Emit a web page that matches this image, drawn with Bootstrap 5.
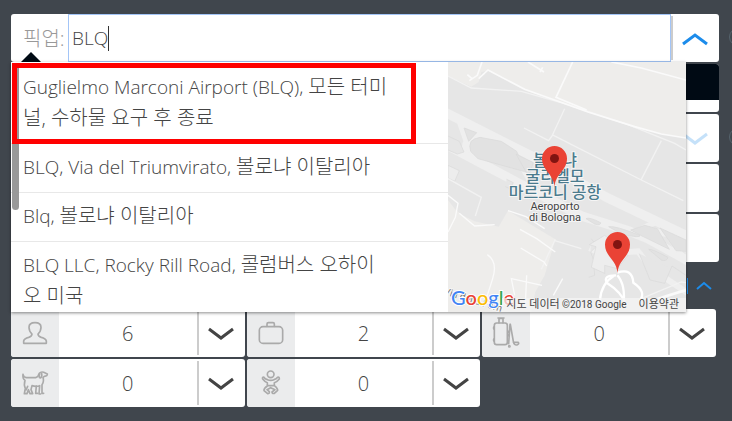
<!DOCTYPE html>
<html lang="ko">

<head>
  <meta charset="UTF-8" />
  <meta name="viewport" content="width=device-width, initial-scale=1.0" />
  <title>픽업</title>
  <link href="https://cdn.jsdelivr.net/npm/bootstrap@5.3.0/dist/css/bootstrap.min.css" rel="stylesheet" />
  <style>
    body {
      background-color: #40464d;
      color: #444;
      font-family: "Open Sans", "Noto Sans CJK KR", sans-serif;
      font-size: 19px;
      font-weight: 300;
      line-height: 31px;
    }

    .booking {
      padding: 14px 13px 14px 11px;
    }

    .fields {
      gap: 2px;
    }

    .field-row {
      height: 48px;
      background: #fff;
      border-radius: 3px;
    }

    .field-row .toggle,
    .counter .toggle {
      width: 48px;
      position: relative;
    }

    .toggle {
      border: 0;
      padding: 0;
      background: transparent;
    }

    .toggle svg,
    .more svg {
      fill: none;
      stroke: #444;
      stroke-width: 3;
    }

    .field-row .toggle svg,
    .more svg {
      stroke: #1c8ceb;
    }

    .counter .toggle::before,
    .pickup .toggle::before {
      content: "";
      position: absolute;
      left: 0;
      top: 2px;
      bottom: 2px;
      width: 2px;
      background: #ccc;
    }

    .pickup label {
      width: 57px;
      padding-left: 12px;
      color: #999;
      font-size: 20px;
      white-space: nowrap;
    }

    .pickup label::after {
      content: "";
      position: absolute;
      left: 10px;
      top: 38px;
      border: 10px solid transparent;
      border-top: 0;
      border-bottom-color: #000a14;
    }

    .pickup input {
      border: 1px solid #a3c5f7;
      padding: 0 3px;
      color: #444;
      font-weight: 300;
      outline: 0;
      caret-color: transparent;
      background: linear-gradient(#333, #333) 39px 11px / 1px 25px no-repeat;
    }

    .hint {
      position: absolute;
      left: calc(100% + 10px);
      top: 14px;
      width: 18px;
      height: 18px;
      border: 1px solid #56646d;
      border-radius: 50%;
    }

    .night {
      height: 36px;
      background: #000a14;
    }

    .faded {
      opacity: .25;
    }

    .more {
      height: 43px;
      padding-right: 7px;
    }

    .more .toggle {
      padding-left: 8px;
      border-left: 1px solid #1c8ceb;
      height: 16px;
    }

    /* suggestions panel */
    .suggest {
      position: absolute;
      z-index: 5;
      top: 48px;
      left: 0;
      right: 33px;
      height: 250px;
      background: #fff;
      box-shadow: 0 1px 3px rgba(0, 0, 0, .45);
    }

    .places {
      flex: 0 0 437px;
      padding-top: 2px;
      overflow: hidden;
    }

    .places a {
      display: block;
      padding: 8px 58px 9px 12px;
      border-bottom: 1px solid #e8e8e8;
      color: #444;
      text-decoration: none;
    }

    /* hangul is set one pixel larger than the latin text beside it */
    .places span[lang] {
      font-size: 20px;
      line-height: 30px;
    }

    .thumb {
      position: absolute;
      left: 1px;
      top: 2px;
      width: 7px;
      height: 146px;
      border-radius: 4px;
      background: #999;
    }

    .chosen {
      position: absolute;
      left: 1px;
      top: 1px;
      width: 404px;
      height: 81px;
      border: 5px solid #f00;
      pointer-events: none;
    }

    .map-pane {
      min-width: 0;
      background: #e6e6e6;
    }

    .map-label {
      font-family: Roboto, "Noto Sans CJK KR", sans-serif;
      text-anchor: middle;
      paint-order: stroke;
      stroke: #f5f5f5;
      stroke-width: 2px;
    }

    .map-legal {
      position: absolute;
      right: 0;
      bottom: 0;
      padding: 0 7px 0 4px;
      gap: 12px;
      background: rgba(245, 245, 245, .7);
      font: 400 10px/14px Roboto, "Noto Sans CJK KR", sans-serif;
      white-space: nowrap;
    }

    .map-legal [lang] {
      font-size: 11px;
    }

    .map-legal a {
      color: #444;
      text-decoration: none;
    }

    /* passenger and luggage counters */
    .counters {
      display: grid;
      grid-template-columns: repeat(3, 1fr);
      gap: 2px;
      padding-right: 3px;
    }

    .counter {
      height: 48px;
      background: #fff;
      border-radius: 3px;
      overflow: hidden;
    }

    .counter label {
      background: #ebeced;
    }

    .counter label svg {
      display: block;
      fill: none;
      stroke: #aaa;
      stroke-width: 5;
      stroke-linejoin: round;
      stroke-linecap: round;
    }

    .counter select {
      appearance: none;
      border: 0;
      background: transparent;
      color: #444;
      font-size: 20px;
      font-weight: 300;
      text-align: center;
      text-align-last: center;
      min-width: 0;
    }
  </style>
</head>

<body class="overflow-hidden">

  <main class="booking">
    <div class="fields position-relative vstack">

      <div class="field-row pickup d-flex position-relative">
        <label for="pickup" class="d-flex align-items-center position-relative">픽업:</label>
        <input id="pickup" type="text" class="flex-grow-1" value="BLQ" autocomplete="off" />
        <button class="toggle" type="button" aria-label="닫기">
          <svg width="26" height="14"><path d="M1 12 13 3 25 12" /></svg>
        </button>
        <span class="hint"></span>
      </div>
      <div class="field-row overflow-hidden"><div class="night"></div></div>
      <div class="field-row d-flex justify-content-end position-relative">
        <button class="toggle faded" type="button" aria-label="열기">
          <svg width="26" height="14"><path d="M1 2 13 11 25 2" /></svg>
        </button>
        <span class="hint"></span>
      </div>
      <div class="field-row"></div>
      <div class="field-row"></div>
      <div class="more d-flex align-items-center justify-content-end">
        <button class="toggle" type="button" aria-label="접기">
          <svg width="16" height="9" class="d-block"><path d="M1 8 8 2 15 8" stroke-width="2" /></svg>
        </button>
      </div>

      <div class="suggest d-flex">
        <div class="places position-relative">
          <a href="#">Guglielmo Marconi Airport (BLQ), <span lang="ko">모든 터미널, 수하물 요구 후 종료</span></a>
          <a href="#">BLQ, Via del Triumvirato, <span lang="ko">볼로냐 이탈리아</span></a>
          <a href="#">Blq, <span lang="ko">볼로냐 이탈리아</span></a>
          <a href="#">BLQ LLC, Rocky Rill Road, <span lang="ko">콜럼버스 오하이오 미국</span></a>
          <span class="thumb"></span>
          <span class="chosen"></span>
        </div>
        <div class="map-pane position-relative flex-grow-1 overflow-hidden">
          <svg class="d-block w-100 h-100" viewBox="0 0 238 250" preserveAspectRatio="xMidYMid slice">
            <g transform="scale(.33334)" fill="none">
              <!-- fields around the airport -->
              <path fill="#eeedeb" d="M0 0H714V228L640 216 540 190 415 150 230 85 120 26 100 30 92 60 70 74 0 42Z" />
              <path fill="#eeedeb" d="M0 414 20 440 40 458 80 478 152 494 180 446 322 532 290 640 262 690 250 750H0Z" />
              <!-- runways and taxiways -->
              <g stroke="#efefef" stroke-width="28">
                <path d="M-10 150 250 282 480 408 730 528" />
                <path d="M-10 246 240 378 400 462 540 506 600 530 730 602" />
                <path stroke-width="18" d="M34 176 62 256M190 258 244 352M50 264 Q50 222 96 216 L150 236M96 216 60 270M620 482 570 506M640 486 700 580M700 530 600 500M425 558 460 576 570 568 610 620 730 700" />
              </g>
              <g fill="#e2e2e2" stroke="#dadada" stroke-width="2">
                <path d="M48 198 86 212 62 238Z" />
                <path d="M68 268Q56 232 96 226L160 238 206 268 234 330 90 290Z" />
                <path d="M204 276 256 302 242 344Z" />
                <path d="M414 470Q424 464 458 482 458 492 440 486ZM482 494Q500 490 576 520 580 530 520 516ZM602 562Q612 560 660 586 656 600 640 594Z" />
                <path d="M590 490 628 500 664 562 582 522 548 504ZM636 498 714 534V568L684 566Z" />
                <path fill="#e6e6e6" d="M0 222 34 238 48 270 28 276 0 264M430 530 446 552 428 570 436 592 440 640 422 646M574 575 606 654 650 664 672 612 714 640M176 352 196 362 186 380 172 374" />
              </g>
              <path fill="#ededed" stroke="#dadada" stroke-width="2" d="M0 310 34 326 20 358 0 348ZM424 548 444 554 430 616 470 634 470 610 508 620 540 580 470 520Z" />
              <!-- thin roads -->
              <g stroke="#f2f2f2" stroke-width="4">
                <path d="M0 42 70 78 220 88 360 128 540 188 680 244 714 264M350 140 312 222 302 236 228 198M312 218 580 354 706 416M640 236 580 352" />
                <path d="M0 350 100 406 82 462M320 536 400 560M322 532 280 622M580 710 700 660 714 662" />
              </g>
              <g stroke="#fafafa" stroke-width="5">
                <path d="M490 0 580 18 714 54M374 0 324 106 416 144M92 50 120 24 230 82 420 150 560 194 640 216 714 228M240 0 288 30M276 30 284 16M102 0 88 40 64 56M58 38 72 50" />
                <path d="M0 400 30 424 22 466 0 510M34 454 80 492 140 488M180 446 234 464 290 500M216 502 266 530 322 570M218 558 288 600 296 612M118 578Q150 600 134 650L116 706M200 700 190 650 282 670M236 640 232 730M344 650 316 700" stroke-width="4" />
                <path d="M456 714Q460 664 500 640M508 632Q552 616 556 662 598 690 574 718M504 640Q462 640 478 664 520 690 536 730M508 640Q534 670 526 730" stroke="#fff" stroke-width="7" />
                <path d="M620 714Q660 700 714 684" stroke-width="8" />
              </g>
            </g>
            <g class="map-label" font-size="16" font-weight="500" fill="#4b7b8d">
              <text x="107" y="104">볼로냐</text>
              <text x="107" y="120">굴리엘모</text>
              <text x="107" y="136">마르코니 공항</text>
            </g>
            <g class="map-label" font-size="11" font-weight="400" fill="#444">
              <text x="107" y="148">Aeroporto</text>
              <text x="107" y="159">di Bologna</text>
              <text x="24" y="241" font-size="10" fill="#777" transform="rotate(17 24 241)">Via della Forn</text>
            </g>
            <g stroke="none" fill="#ea4335">
              <path d="M106.500 125C105.500 111 94 109 94 96.500A12.500 12.500 0 0 1 119 96.500C119 109 107.500 111 106.500 125Z" />
              <path d="M169.500 211C168.500 197 157 195 157 182.500A12.500 12.500 0 0 1 182 182.500C182 195 170.500 197 169.500 211Z" />
            </g>
            <circle cx="106.500" cy="96.500" r="4.500" fill="#811411" />
            <circle cx="169.500" cy="182.500" r="4.500" fill="#811411" />
            <text x="3" y="243" font-family="Lato, sans-serif" font-size="20" font-weight="500" stroke="#fff" stroke-width="2" paint-order="stroke"><tspan fill="#4285f4">G</tspan><tspan fill="#ea4335">o</tspan><tspan fill="#fbbc05">o</tspan><tspan fill="#4285f4">g</tspan><tspan fill="#34a853">l</tspan><tspan fill="#ea4335">e</tspan></text>
          </svg>
          <div class="map-legal d-flex">
            <span><span lang="ko">지도 데이터</span> ©2018 Google</span>
            <a href="#" lang="ko">이용약관</a>
          </div>
        </div>
      </div>

      <div class="counters">
        <div class="counter d-flex">
          <label for="people" aria-label="승객">
            <svg width="48" height="48" viewBox="0 0 144 144"><path d="M38 103V96Q40 88 53 85 63 82 63 75 54 67 54 55 54 41 72 41 90 41 90 55 90 67 81 75 81 82 91 85 104 88 106 96V103Z" /></svg>
          </label>
          <select id="people" class="flex-grow-1"><option>6</option></select>
          <button class="toggle" type="button" aria-label="승객 수 선택"><svg width="26" height="14"><path d="M1 2 13 11 25 2" /></svg></button>
        </div>
        <div class="counter d-flex">
          <label for="bags" aria-label="수하물">
            <svg width="48" height="48" viewBox="0 0 144 144"><rect x="37" y="53" width="70" height="50" rx="11" /><path d="M60 52V45Q60 41 64 41H78Q82 41 82 45V52" /></svg>
          </label>
          <select id="bags" class="flex-grow-1"><option>2</option></select>
          <button class="toggle" type="button" aria-label="수하물 수 선택"><svg width="26" height="14"><path d="M1 2 13 11 25 2" /></svg></button>
        </div>
        <div class="counter d-flex">
          <label for="sport" aria-label="특수 수하물">
            <svg width="48" height="48" viewBox="0 0 144 144">
              <rect x="37" y="42" width="39" height="65" rx="7" />
              <path d="M51 41V28H63V41M48 27H66M35 54V60M35 90V96M78 66 82 74 78 80M84 46 80 104M85 46 94 97Q96 109 105 108 112 106 109 100H94" />
              <circle cx="82" cy="112" r="2" />
            </svg>
          </label>
          <select id="sport" class="flex-grow-1"><option>0</option></select>
          <button class="toggle" type="button" aria-label="특수 수하물 수 선택"><svg width="26" height="14"><path d="M1 2 13 11 25 2" /></svg></button>
        </div>
        <div class="counter d-flex">
          <label for="pets" aria-label="반려동물">
            <svg width="48" height="48" viewBox="0 0 144 144">
              <path d="M36 46Q38 55 46 56H74Q82 54 85 43 90 37 98 40L109 45Q110 51 100 52L96 55Q100 68 93 77V103H98M89 105H84L86 80Q76 84 63 80L60 92 65 104H57L52 92 48 104H40L43 88Q38 78 42 64 34 58 36 46" />
              <path d="M86 44Q82 56 88 57 94 54 92 44M76 81 74 103H80M50 82 45 93" />
            </svg>
          </label>
          <select id="pets" class="flex-grow-1"><option>0</option></select>
          <button class="toggle" type="button" aria-label="반려동물 수 선택"><svg width="26" height="14"><path d="M1 2 13 11 25 2" /></svg></button>
        </div>
        <div class="counter d-flex">
          <label for="infants" aria-label="유아">
            <svg width="48" height="48" viewBox="0 0 144 144">
              <circle cx="71" cy="46" r="10" />
              <path d="M61 62Q54 60 50 54 45 54 47 60 53 68 61 71V80H82V71Q91 68 97 60 97 53 92 55 88 61 81 62 72 66 61 62M61 81Q50 88 51 95L62 104Q68 104 67 98L60 92 71 86 84 92 75 99Q75 105 82 103L92 94Q92 87 82 80" />
            </svg>
          </label>
          <select id="infants" class="flex-grow-1"><option>0</option></select>
          <button class="toggle" type="button" aria-label="유아 수 선택"><svg width="26" height="14"><path d="M1 2 13 11 25 2" /></svg></button>
        </div>
      </div>

    </div>
  </main>

  <script src="https://cdn.jsdelivr.net/npm/bootstrap@5.3.0/dist/js/bootstrap.bundle.min.js"></script>
</body>

</html>
